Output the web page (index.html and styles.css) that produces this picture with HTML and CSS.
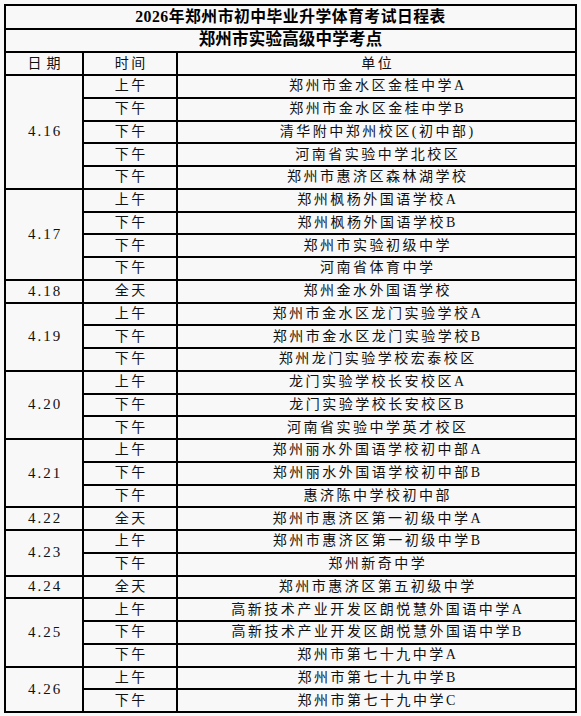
FILE: index.html
```html
<!DOCTYPE html>
<html lang="zh-CN">
<head>
<meta charset="utf-8">
<title>2026年郑州市初中毕业升学体育考试日程表</title>
<link rel="stylesheet" href="styles.css">
</head>
<body>
<div class="sheet">
  <div class="cell title t1">2026年郑州市初中毕业升学体育考试日程表</div>
  <div class="cell title t2">郑州市实验高级中学考点</div>
  <div class="cell head wide">日期</div>
  <div class="cell head">时间</div>
  <div class="cell head">单位</div>

  <div class="cell date r5">4.16</div>
  <div class="cell">上午</div><div class="cell">郑州市金水区金桂中学A</div>
  <div class="cell">下午</div><div class="cell">郑州市金水区金桂中学B</div>
  <div class="cell">下午</div><div class="cell">清华附中郑州校区(初中部)</div>
  <div class="cell">下午</div><div class="cell">河南省实验中学北校区</div>
  <div class="cell">下午</div><div class="cell">郑州市惠济区森林湖学校</div>

  <div class="cell date r4">4.17</div>
  <div class="cell">上午</div><div class="cell">郑州枫杨外国语学校A</div>
  <div class="cell">下午</div><div class="cell">郑州枫杨外国语学校B</div>
  <div class="cell">下午</div><div class="cell">郑州市实验初级中学</div>
  <div class="cell">下午</div><div class="cell">河南省体育中学</div>

  <div class="cell date">4.18</div>
  <div class="cell">全天</div><div class="cell">郑州金水外国语学校</div>

  <div class="cell date r3">4.19</div>
  <div class="cell">上午</div><div class="cell">郑州市金水区龙门实验学校A</div>
  <div class="cell">下午</div><div class="cell">郑州市金水区龙门实验学校B</div>
  <div class="cell">下午</div><div class="cell">郑州龙门实验学校宏泰校区</div>

  <div class="cell date r3">4.20</div>
  <div class="cell">上午</div><div class="cell">龙门实验学校长安校区A</div>
  <div class="cell">下午</div><div class="cell">龙门实验学校长安校区B</div>
  <div class="cell">下午</div><div class="cell">河南省实验中学英才校区</div>

  <div class="cell date r3">4.21</div>
  <div class="cell">上午</div><div class="cell">郑州丽水外国语学校初中部A</div>
  <div class="cell">下午</div><div class="cell">郑州丽水外国语学校初中部B</div>
  <div class="cell">下午</div><div class="cell">惠济陈中学校初中部</div>

  <div class="cell date">4.22</div>
  <div class="cell">全天</div><div class="cell">郑州市惠济区第一初级中学A</div>

  <div class="cell date r2">4.23</div>
  <div class="cell">上午</div><div class="cell">郑州市惠济区第一初级中学B</div>
  <div class="cell">下午</div><div class="cell">郑州新奇中学</div>

  <div class="cell date">4.24</div>
  <div class="cell">全天</div><div class="cell">郑州市惠济区第五初级中学</div>

  <div class="cell date r3">4.25</div>
  <div class="cell">上午</div><div class="cell">高新技术产业开发区朗悦慧外国语中学A</div>
  <div class="cell">下午</div><div class="cell">高新技术产业开发区朗悦慧外国语中学B</div>
  <div class="cell">下午</div><div class="cell">郑州市第七十九中学A</div>

  <div class="cell date r2">4.26</div>
  <div class="cell">上午</div><div class="cell">郑州市第七十九中学B</div>
  <div class="cell">下午</div><div class="cell">郑州市第七十九中学C</div>
</div>
</body>
</html>
```

FILE: styles.css
```css
html, body {
  margin: 0;
  background: #f8f8f8;
}
body {
  padding: 4px;
  font-family: "Liberation Serif", "Noto Sans CJK SC", serif;
  color: #111;
}
.sheet {
  display: grid;
  grid-template-columns: 76px 92px 397px;
  grid-template-rows: 22px 21px 21px repeat(28, 20.75px);
  gap: 2px;
  padding: 2px;
  background: #000;
  width: max-content;
}
.cell {
  background: #f8f8f8;
  display: flex;
  align-items: center;
  justify-content: center;
  font-size: 14px;
  letter-spacing: 2.5px;
  padding-left: 2.5px;
  line-height: 1;
  white-space: nowrap;
  overflow: hidden;
}
.title {
  grid-column: 1 / -1;
  font-weight: 700;
  color: #000;
  letter-spacing: 0;
  padding-left: 0;
}
.t1 { font-size: 15.8px; letter-spacing: 0.5px; }
.t2 { font-size: 16.5px; letter-spacing: 0.2px; }
.head.wide { letter-spacing: 5px; padding-left: 5px; }
.date {
  font-size: 15px;
  letter-spacing: 2px;
  padding-left: 2px;
}
.r2 { grid-row: span 2; }
.r3 { grid-row: span 3; }
.r4 { grid-row: span 4; }
.r5 { grid-row: span 5; }
```
